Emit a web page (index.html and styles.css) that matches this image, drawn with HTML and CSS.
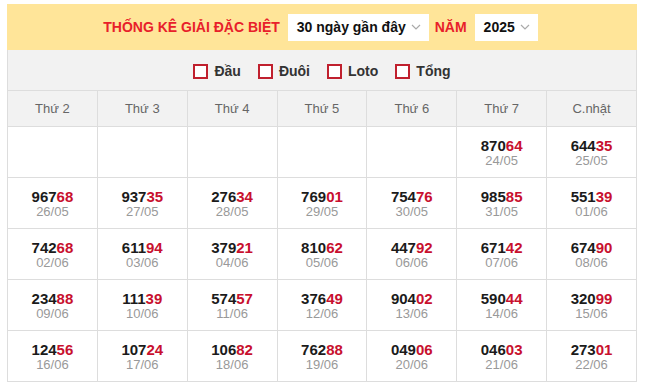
FILE: index.html
```html
<!DOCTYPE html>
<html lang="vi">
<head>
<meta charset="utf-8">
<link rel="stylesheet" href="styles.css">
</head>
<body>
<div class="box">
  <div class="head">
    <span class="title">THỐNG KÊ GIẢI ĐẶC BIỆT</span>
    <span class="sel sel-wide">30 ngày gần đây<svg class="chev" viewBox="0 0 10 6" width="10" height="6"><path d="M1 1l4 4 4-4" fill="none" stroke="#aaa" stroke-width="1.2"/></svg></span>
    <span class="title nam">NĂM</span>
    <span class="sel sel-year">2025<svg class="chev" viewBox="0 0 10 6" width="10" height="6"><path d="M1 1l4 4 4-4" fill="none" stroke="#aaa" stroke-width="1.2"/></svg></span>
  </div>
  <div class="checks">
    <label class="chk"><span class="cb"></span>Đầu</label>
    <label class="chk"><span class="cb"></span>Đuôi</label>
    <label class="chk"><span class="cb"></span>Loto</label>
    <label class="chk"><span class="cb"></span>Tổng</label>
  </div>
  <table class="grid">
    <thead>
      <tr><th>Thứ 2</th><th>Thứ 3</th><th>Thứ 4</th><th>Thứ 5</th><th>Thứ 6</th><th>Thứ 7</th><th>C.nhật</th></tr>
    </thead>
    <tbody>
      <tr>
        <td></td><td></td><td></td><td></td><td></td>
        <td><div class="n">870<b>64</b></div><div class="d">24/05</div></td>
        <td><div class="n">644<b>35</b></div><div class="d">25/05</div></td>
      </tr>
      <tr>
        <td><div class="n">967<b>68</b></div><div class="d">26/05</div></td>
        <td><div class="n">937<b>35</b></div><div class="d">27/05</div></td>
        <td><div class="n">276<b>34</b></div><div class="d">28/05</div></td>
        <td><div class="n">769<b>01</b></div><div class="d">29/05</div></td>
        <td><div class="n">754<b>76</b></div><div class="d">30/05</div></td>
        <td><div class="n">985<b>85</b></div><div class="d">31/05</div></td>
        <td><div class="n">551<b>39</b></div><div class="d">01/06</div></td>
      </tr>
      <tr>
        <td><div class="n">742<b>68</b></div><div class="d">02/06</div></td>
        <td><div class="n">611<b>94</b></div><div class="d">03/06</div></td>
        <td><div class="n">379<b>21</b></div><div class="d">04/06</div></td>
        <td><div class="n">810<b>62</b></div><div class="d">05/06</div></td>
        <td><div class="n">447<b>92</b></div><div class="d">06/06</div></td>
        <td><div class="n">671<b>42</b></div><div class="d">07/06</div></td>
        <td><div class="n">674<b>90</b></div><div class="d">08/06</div></td>
      </tr>
      <tr>
        <td><div class="n">234<b>88</b></div><div class="d">09/06</div></td>
        <td><div class="n">111<b>39</b></div><div class="d">10/06</div></td>
        <td><div class="n">574<b>57</b></div><div class="d">11/06</div></td>
        <td><div class="n">376<b>49</b></div><div class="d">12/06</div></td>
        <td><div class="n">904<b>02</b></div><div class="d">13/06</div></td>
        <td><div class="n">590<b>44</b></div><div class="d">14/06</div></td>
        <td><div class="n">320<b>99</b></div><div class="d">15/06</div></td>
      </tr>
      <tr>
        <td><div class="n">124<b>56</b></div><div class="d">16/06</div></td>
        <td><div class="n">107<b>24</b></div><div class="d">17/06</div></td>
        <td><div class="n">106<b>82</b></div><div class="d">18/06</div></td>
        <td><div class="n">762<b>88</b></div><div class="d">19/06</div></td>
        <td><div class="n">049<b>06</b></div><div class="d">20/06</div></td>
        <td><div class="n">046<b>03</b></div><div class="d">21/06</div></td>
        <td><div class="n">273<b>01</b></div><div class="d">22/06</div></td>
      </tr>
    </tbody>
  </table>
</div>
</body>
</html>
```
FILE: styles.css
```css
html, body {
  margin: 0;
  padding: 0;
  background: #fff;
}
body {
  font-family: "Liberation Sans", Arial, sans-serif;
  padding: 4px 8px 0 7px;
}
.box {
  width: 630px;
}
.head {
  background: #ffe599;
  height: 46px;
  display: flex;
  align-items: center;
  justify-content: center;
  gap: 8px;
  box-sizing: border-box;
  padding-right: 3px;
}
.title {
  color: #e8202a;
  font-weight: bold;
  font-size: 14px;
}
.nam {
  margin-left: -2px;
}
.sel {
  background: #fff;
  height: 27px;
  display: flex;
  align-items: center;
  box-sizing: border-box;
  padding: 0 8px 0 9px;
  font-weight: bold;
  font-size: 14px;
  color: #111;
  gap: 5px;
}
.chev { display: block; }
.checks {
  background: #f2f2f2;
  height: 40px;
  border-left: 1px solid #ddd;
  border-right: 1px solid #ddd;
  display: flex;
  align-items: center;
  justify-content: center;
  gap: 17px;
  box-sizing: border-box;
  padding-top: 2px;
}
.chk {
  display: flex;
  align-items: center;
  gap: 6px;
  font-weight: bold;
  font-size: 14px;
  color: #333;
}
.cb {
  width: 11px;
  height: 11px;
  border: 2px solid #c0202e;
  background: #fff;
  display: block;
}
.grid {
  width: 630px;
  border-collapse: collapse;
  table-layout: fixed;
}
.grid th, .grid td {
  border: 1px solid #ddd;
  text-align: center;
  padding: 0;
}
.grid th {
  background: #f2f2f2;
  height: 35px;
  font-weight: normal;
  font-size: 13px;
  color: #666;
}
.grid td {
  height: 50px;
}
.n {
  font-weight: bold;
  font-size: 15px;
  color: #1b1b1b;
  line-height: 17px;
}
.n b {
  color: #c8102e;
}
.d {
  font-size: 13px;
  color: #999;
  line-height: 15px;
  margin-top: -1px;
}
```
